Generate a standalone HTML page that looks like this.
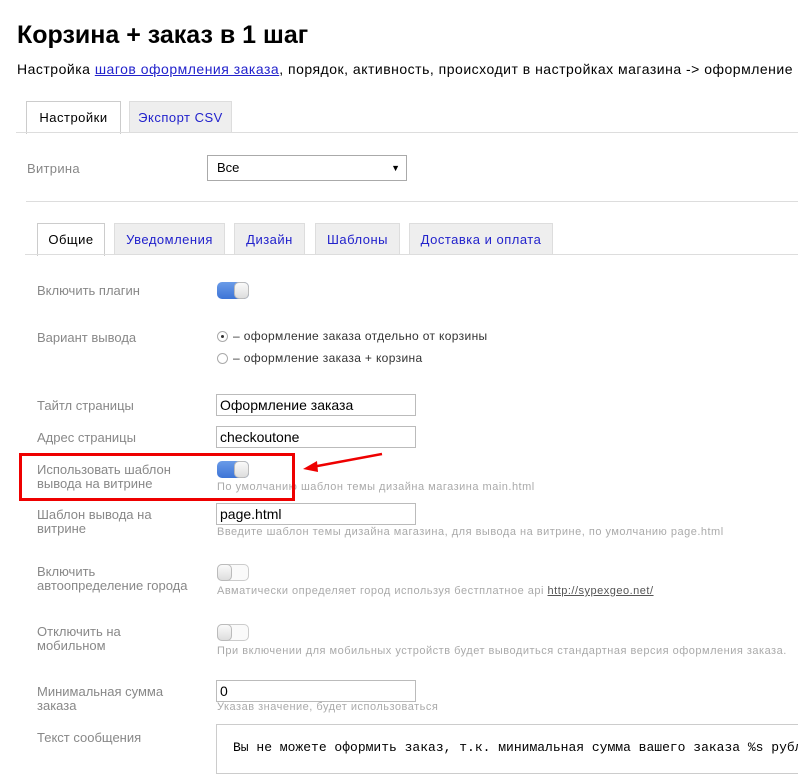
<!DOCTYPE html>
<html><head><meta charset="utf-8"><style>
body{margin:0;width:798px;height:773px;overflow:hidden;background:#fff;font-family:"Liberation Sans","DejaVu Sans",sans-serif;position:relative}
.a{position:absolute;white-space:nowrap}
.lbl{position:absolute;left:37px;font-size:13px;color:#888;line-height:14px}
.hint{position:absolute;left:217px;font-size:11px;color:#aaa;white-space:nowrap;letter-spacing:.5px}
.inp{position:absolute;left:216px;width:200px;height:22px;border:1px solid #bbb;font-size:14px;line-height:21px;padding-left:3px;box-sizing:border-box;color:#000}
.tab{position:absolute;height:31px;border:1px solid #ddd;border-bottom:none;background:#eee;color:#22c;font-size:13px;line-height:31px;text-align:center;box-sizing:border-box;letter-spacing:.5px}
.tab.on{background:#fff;color:#000;border-color:#ccc;height:33px}
.tg{position:absolute;left:217px;width:32px;height:17px;border-radius:5px;box-sizing:border-box}
.tg.on{background:linear-gradient(#6a9be8,#3d74d6)}
.tg.off{background:#fafafa;border:1px solid #ccc}
.tg i{position:absolute;top:0;width:15px;height:17px;border:1px solid #bbb;border-radius:5px;background:linear-gradient(#fafafa,#ddd);box-sizing:border-box}
.tg.on i{right:0}.tg.off i{left:-1px;top:-1px}
</style></head><body>
<div class="a" style="left:17px;top:21px;font-size:25px;font-weight:bold;color:#000">Корзина + заказ в 1 шаг</div>
<div class="a" style="left:17px;top:61px;font-size:14px;color:#000;letter-spacing:.5px">Настройка <span style="color:#22c;text-decoration:underline">шагов оформления заказа</span>, порядок, активность, происходит в настройках магазина -&gt; оформление</div>
<div class="tab on" style="left:26px;top:101px;width:95px">Настройки</div>
<div class="tab" style="left:129px;top:101px;width:103px">Экспорт CSV</div>
<div class="a" style="left:16px;top:132px;width:782px;height:1px;background:#ddd"></div>
<div class="a" style="left:27px;top:161px;font-size:13px;color:#888;letter-spacing:.3px">Витрина</div>
<div class="a" style="left:207px;top:155px;width:200px;height:26px;border:1px solid #aaa;box-sizing:border-box;font-size:13px;line-height:24px;padding-left:9px">Все<span style="position:absolute;right:6px;font-size:9px">▼</span></div>
<div class="a" style="left:26px;top:201px;width:772px;height:1px;background:#ddd"></div>
<div class="tab on" style="left:37px;top:223px;width:68px">Общие</div>
<div class="tab" style="left:114px;top:223px;width:111px">Уведомления</div>
<div class="tab" style="left:234px;top:223px;width:71px">Дизайн</div>
<div class="tab" style="left:315px;top:223px;width:85px">Шаблоны</div>
<div class="tab" style="left:409px;top:223px;width:144px">Доставка и оплата</div>
<div class="a" style="left:25px;top:254px;width:773px;height:1px;background:#ddd"></div>

<div class="lbl" style="top:284px">Включить плагин</div>
<div class="tg on" style="top:282px"><i></i></div>

<div class="lbl" style="top:331px">Вариант вывода</div>
<div class="a" style="left:217px;top:331px;width:11px;height:11px;border:1px solid #aaa;border-radius:50%;box-sizing:border-box"><div style="position:absolute;left:3px;top:3px;width:3px;height:3px;background:#333;border-radius:50%"></div></div>
<div class="a" style="left:233px;top:329px;font-size:12px;color:#333;letter-spacing:.35px">– оформление заказа отдельно от корзины</div>
<div class="a" style="left:217px;top:353px;width:11px;height:11px;border:1px solid #aaa;border-radius:50%;box-sizing:border-box"></div>
<div class="a" style="left:233px;top:351px;font-size:12px;color:#333;letter-spacing:.35px">– оформление заказа + корзина</div>

<div class="lbl" style="top:399px">Тайтл страницы</div>
<div class="inp" style="top:394px">Оформление заказа</div>
<div class="lbl" style="top:431px">Адрес страницы</div>
<div class="inp" style="top:426px">checkoutone</div>

<div class="lbl" style="top:463px">Использовать шаблон<br>вывода на витрине</div>
<div class="tg on" style="top:461px"><i></i></div>
<div class="hint" style="top:481px">По умолчанию шаблон темы дизайна магазина main.html</div>
<div class="a" style="left:19px;top:453px;width:276px;height:48px;border:3px solid #e00;box-sizing:border-box"></div>
<svg class="a" style="left:300px;top:450px" width="85" height="25"><line x1="82" y1="4" x2="12" y2="17" stroke="#e00" stroke-width="2.5"/><polygon points="3,19 17,11 18,22" fill="#e00"/></svg>

<div class="lbl" style="top:508px">Шаблон вывода на<br>витрине</div>
<div class="inp" style="top:503px">page.html</div>
<div class="hint" style="top:526px">Введите шаблон темы дизайна магазина, для вывода на витрине, по умолчанию page.html</div>

<div class="lbl" style="top:565px">Включить<br>автоопределение города</div>
<div class="tg off" style="top:564px"><i></i></div>
<div class="hint" style="top:585px">Авматически определяет город используя бестплатное api <span style="color:#555;text-decoration:underline">http://sypexgeo.net/</span></div>

<div class="lbl" style="top:625px">Отключить на<br>мобильном</div>
<div class="tg off" style="top:624px"><i></i></div>
<div class="hint" style="top:645px">При включении для мобильных устройств будет выводиться стандартная версия оформления заказа.</div>

<div class="lbl" style="top:685px">Минимальная сумма<br>заказа</div>
<div class="inp" style="top:680px">0</div>
<div class="hint" style="top:701px">Указав значение, будет использоваться</div>

<div class="lbl" style="top:731px">Текст сообщения</div>
<div class="a" style="left:216px;top:724px;width:600px;height:50px;border:1px solid #ccc;box-sizing:border-box;font-family:'Liberation Mono',monospace;font-size:13px;padding:15px 0 0 16px">Вы не можете оформить заказ, т.к. минимальная сумма вашего заказа %s рублей</div>
</body></html>
